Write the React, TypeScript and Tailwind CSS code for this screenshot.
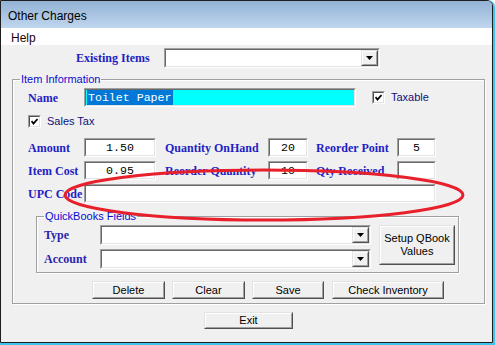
const sans = "font-['Liberation_Sans',Arial,sans-serif]";
const serifLabel = "font-['Liberation_Serif','Times_New_Roman',serif] font-bold text-[12px] text-[#1f1fc4] whitespace-nowrap";
const mono = "font-['Liberation_Mono','Courier_New',monospace] text-[11.6px] text-black";

function Sunken({ className = "", inner = "bg-white", children }: { className?: string; inner?: string; children?: React.ReactNode }) {
  return (
    <div className={`border border-t-[#a0a0a0] border-l-[#a0a0a0] border-b-white border-r-white ${className}`}>
      <div className={`h-full w-full border border-t-[#696969] border-l-[#696969] border-b-[#e3e3e3] border-r-[#e3e3e3] ${inner}`}>
        {children}
      </div>
    </div>
  );
}

function Raised({ className = "", children }: { className?: string; children?: React.ReactNode }) {
  return (
    <div className={`border border-t-[#e3e3e3] border-l-[#e3e3e3] border-b-[#505050] border-r-[#505050] ${className}`}>
      <div className="h-full w-full border border-t-white border-l-white border-b-[#a0a0a0] border-r-[#a0a0a0] bg-[#f0f0f0] flex items-center justify-center">
        {children}
      </div>
    </div>
  );
}

function Combo({ className = "" }: { className?: string }) {
  return (
    <Sunken className={className} inner="bg-white flex justify-end">
      <Raised className="w-[17px] h-full">
        <svg width="7" height="4" viewBox="0 0 7 4">
          <polygon points="0,0 7,0 3.5,4" fill="#000" />
        </svg>
      </Raised>
    </Sunken>
  );
}

function NumBox({ className = "", value = "" }: { className?: string; value?: string }) {
  return (
    <Sunken className={className} inner="bg-white flex items-center justify-center">
      <span className={`${mono} leading-none`}>{value}</span>
    </Sunken>
  );
}

function Check() {
  return (
    <div className="w-[13px] h-[13px] border border-t-[#a0a0a0] border-l-[#a0a0a0] border-b-white border-r-white">
      <div className="h-full w-full border border-t-[#505050] border-l-[#505050] border-b-[#e3e3e3] border-r-[#e3e3e3] bg-white flex items-center justify-center">
        <svg width="7" height="7" viewBox="0 0 7 7">
          <polyline points="0.5,3 2.5,5.5 6.5,1" fill="none" stroke="#000" strokeWidth="1.8" />
        </svg>
      </div>
    </div>
  );
}

function Btn({ className = "", children }: { className?: string; children?: React.ReactNode }) {
  return (
    <Raised className={className}>
      <span className={`${sans} text-[11px] leading-[13px] text-black text-center`}>{children}</span>
    </Raised>
  );
}

export default function App() {
  return (
    <div className="relative w-[495px] h-[345px] bg-white">
      <div className="w-full h-full border-r-2 border-b-2 border-[#3fc4ee] rounded-tr-[7px]">
        <div className="w-full h-full flex flex-col border border-[#1e1e1e] rounded-tr-[6px] overflow-hidden bg-[#f0f0f0]">
          {/* title bar */}
          <div className="h-[27px] bg-gradient-to-b from-[#93b2d5] to-[#bfd6ee] flex items-start pt-[8px] pl-[7px]">
            <span className={`${sans} text-[12px] leading-[14px] text-black`}>Other Charges</span>
          </div>
          {/* menu */}
          <div className="h-[17px] bg-white flex items-center pt-[2px] pl-[10px]">
            <span className={`${sans} text-[12px] text-[#1c0505]`}>Help</span>
          </div>

          {/* body */}
          <div className="flex-1 flex flex-col">
            <div className="mt-[3px] h-[20px] flex items-center pl-[75px]">
              <span className={`${serifLabel} w-[88px]`}>Existing Items</span>
              <Combo className="w-[216px] h-[20px]" />
            </div>

            <fieldset className="mt-[4px] ml-[11px] w-[473px] h-[232px] border border-[#a0a0a0] shadow-[inset_1px_1px_0_#ffffff,1px_1px_0_#ffffff]">
              <legend className={`${sans} ml-[7px] px-[1px] text-[11px] leading-[14px] text-[#0a0ad0]`}>Item Information</legend>

              <div className="pl-[15px]">
                {/* name row */}
                <div className="mt-[2px] h-[19px] flex items-center">
                  <span className={`${serifLabel} w-[56px]`}>Name</span>
                  <Sunken className="w-[272px] h-[19px]" inner="bg-[#00ffff] flex items-center pl-[1px]">
                    <span className={`${mono} bg-[#0078d7] text-white leading-[15px] px-[1px]`}>Toilet Paper</span>
                  </Sunken>
                  <div className="ml-[16px] flex items-center gap-[6px]">
                    <Check />
                    <span className={`${sans} text-[11px] text-[#10107a]`}>Taxable</span>
                  </div>
                </div>

                {/* sales tax */}
                <div className="mt-[8px] h-[13px] flex items-center gap-[6px]">
                  <Check />
                  <span className={`${sans} text-[11px] text-[#10107a]`}>Sales Tax</span>
                </div>

                {/* amount */}
                <div className="mt-[10px] h-[19px] flex items-center">
                  <span className={`${serifLabel} w-[56px]`}>Amount</span>
                  <NumBox className="w-[72px] h-[19px]" value="1.50" />
                  <span className={`${serifLabel} ml-[9px] w-[103px]`}>Quantity OnHand</span>
                  <NumBox className="w-[40px] h-[19px]" value="20" />
                  <span className={`${serifLabel} ml-[8px] w-[81px]`}>Reorder Point</span>
                  <NumBox className="w-[39px] h-[19px]" value="5" />
                </div>

                {/* item cost */}
                <div className="mt-[4px] h-[19px] flex items-center">
                  <span className={`${serifLabel} w-[56px]`}>Item Cost</span>
                  <NumBox className="w-[72px] h-[19px]" value="0.95" />
                  <span className={`${serifLabel} ml-[9px] w-[103px]`}>Reorder Quantity</span>
                  <NumBox className="w-[40px] h-[19px]" value="10" />
                  <span className={`${serifLabel} ml-[8px] w-[81px]`}>Qty Received</span>
                  <NumBox className="w-[39px] h-[19px]" value="" />
                </div>

                {/* upc */}
                <div className="mt-[4px] h-[19px] flex items-center">
                  <span className={`${serifLabel} w-[56px]`}>UPC Code</span>
                  <Sunken className="w-[352px] h-[19px]" />
                </div>

                {/* quickbooks */}
                <fieldset className="mt-[6px] ml-[8px] w-[423px] h-[64px] border border-[#a0a0a0] shadow-[inset_1px_1px_0_#ffffff,1px_1px_0_#ffffff]">
                  <legend className={`${sans} ml-[7px] px-[1px] text-[11px] leading-[14px] text-[#0a0ad0]`}>QuickBooks Fields</legend>
                  <div className="mt-[2px] pl-[7px] flex">
                    <div className="flex flex-col gap-[4px]">
                      <div className="h-[20px] flex items-center">
                        <span className={`${serifLabel} text-[#2a1fae] w-[56px]`}>Type</span>
                        <Combo className="w-[271px] h-[20px]" />
                      </div>
                      <div className="h-[20px] flex items-center">
                        <span className={`${serifLabel} text-[#2a1fae] w-[56px]`}>Account</span>
                        <Combo className="w-[271px] h-[20px]" />
                      </div>
                    </div>
                    <Btn className="ml-[8px] w-[76px] h-[40px]">
                      Setup QBook
                      <br />
                      Values
                    </Btn>
                  </div>
                </fieldset>

                {/* action buttons */}
                <div className="mt-[8px] ml-[64px] flex">
                  <Btn className="w-[73px] h-[18px]">Delete</Btn>
                  <Btn className="ml-[7px] w-[73px] h-[18px]">Clear</Btn>
                  <Btn className="ml-[7px] w-[72px] h-[18px]">Save</Btn>
                  <Btn className="ml-[8px] w-[112px] h-[18px]">Check Inventory</Btn>
                </div>
              </div>
            </fieldset>

            <div className="mt-[8px] pl-[203px]">
              <Btn className="w-[89px] h-[17px]">Exit</Btn>
            </div>
          </div>
        </div>
      </div>

      {/* red annotation circle */}
      <svg className="absolute inset-0 pointer-events-none" width="495" height="345" viewBox="0 0 495 345">
        <ellipse cx="264" cy="195" rx="199" ry="25" fill="none" stroke="#e8202b" strokeWidth="3" />
      </svg>
    </div>
  );
}
